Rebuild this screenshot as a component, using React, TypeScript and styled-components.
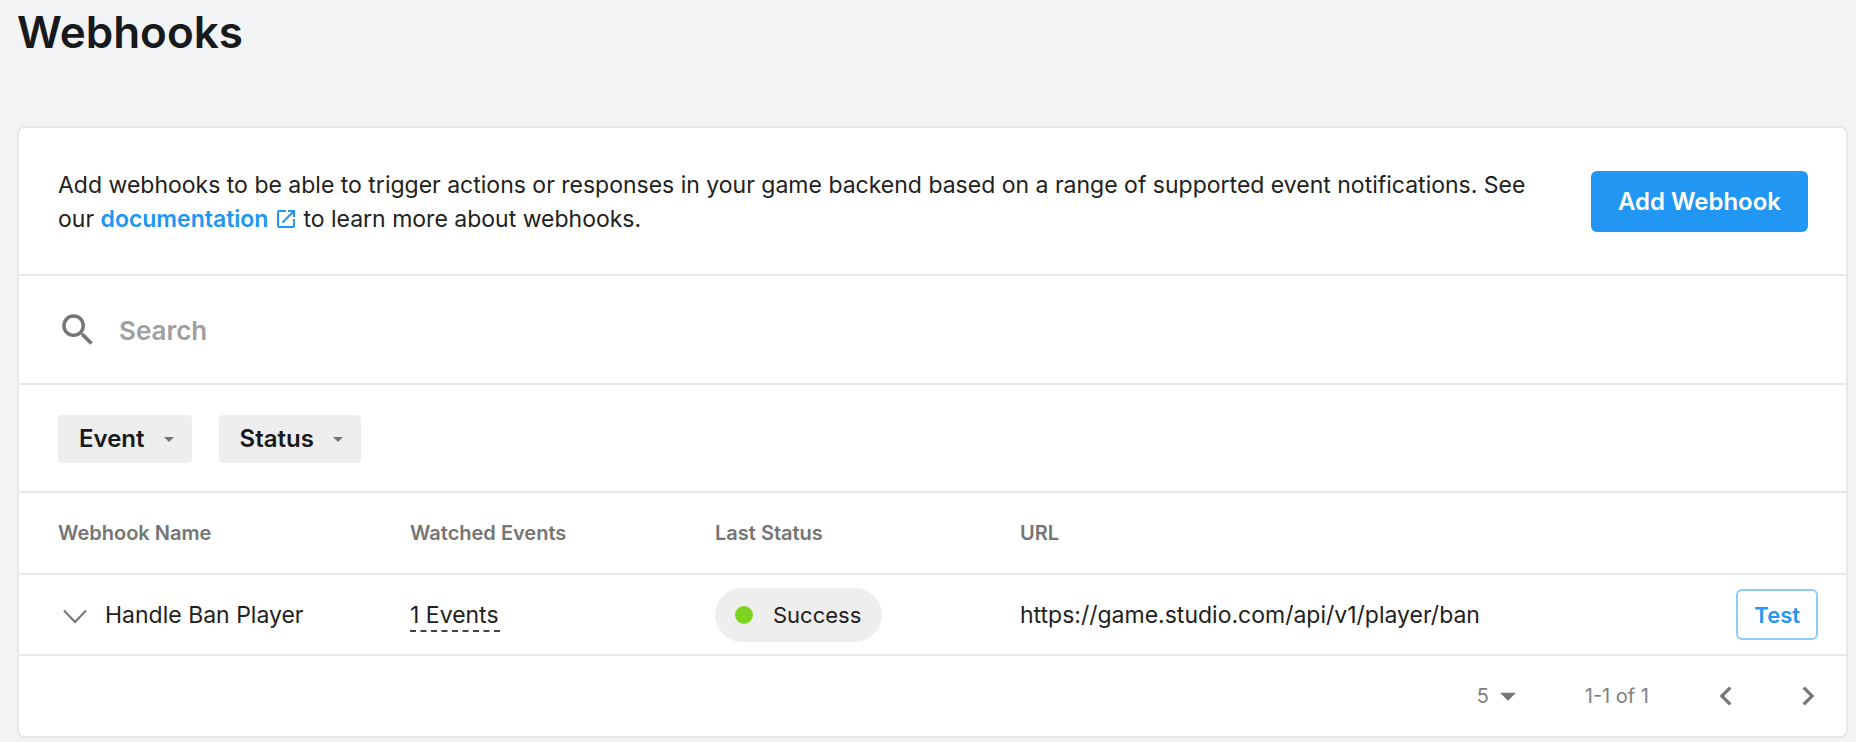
import React from "react";
import styled, { createGlobalStyle } from "styled-components";
import { MdSearch, MdOpenInNew, MdArrowDropDown, MdChevronLeft, MdChevronRight } from "react-icons/md";

const line = "2px solid #e8e8e8";

const GlobalStyle = createGlobalStyle`
  * { box-sizing: border-box; }
  body {
    margin: 0;
    background: #f1f3f5;
    color: #212121;
    font-family: Inter, "Liberation Sans", sans-serif;
    font-size: 23px;
    line-height: 34px;
  }
  button, input, select { font: inherit; color: inherit; }
  button { cursor: pointer; }
`;

const Page = styled.main`
  padding: 4px 8px 5px 17px;
`;

const Title = styled.h1`
  margin: 0 0 66px;
  font-size: 44px;
  line-height: 56px;
  font-weight: 600;
  color: #18191a;
`;

const Card = styled.section`
  background: #fff;
  border: ${line};
  border-radius: 8px;
`;

const Intro = styled.div`
  display: flex;
  align-items: flex-start;
  justify-content: space-between;
  gap: 32px;
  padding: 40px 38px 38px 39px;
  border-bottom: ${line};

  p { margin: 0; flex: 1; }
`;

const DocLink = styled.a`
  display: inline-flex;
  align-items: center;
  gap: 6px;
  margin-right: 5px;
  color: #2196f3;
  font-weight: 600;
  text-decoration: none;
`;

const PrimaryButton = styled.button`
  margin-top: 3px;
  height: 61px;
  padding: 0 27px;
  border: 0;
  border-radius: 6px;
  background: #2196f3;
  color: #fff;
  font-size: 24px;
  font-weight: 600;
  white-space: nowrap;
`;

const SearchBar = styled.label`
  display: flex;
  align-items: center;
  gap: 20px;
  height: 109px;
  padding: 0 38px;
  border-bottom: ${line};
  color: #757575;
`;

const SearchInput = styled.input`
  flex: 1;
  padding: 2px 0 0;
  border: 0;
  outline: 0;
  font-size: 26px;
  font-weight: 600;

  &::placeholder { color: #a0a0a0; opacity: 1; }
`;

const Filters = styled.div`
  display: flex;
  align-items: center;
  gap: 27px;
  height: 108px;
  padding: 2px 39px 0;
  border-bottom: ${line};
`;

const FilterButton = styled.button`
  display: flex;
  align-items: center;
  gap: 12px;
  height: 48px;
  padding: 0 11px 0 21px;
  border: 0;
  border-radius: 4px;
  background: #eee;
  color: #18191a;
  font-size: 24px;
  font-weight: 600;

  svg { color: #757575; }
`;

const Table = styled.table`
  width: 100%;
  border-collapse: separate;
  border-spacing: 0;
  table-layout: fixed;

  tr { height: 81px; }
  thead tr { height: 82px; }
  th, td { padding: 0; border-bottom: ${line}; text-align: left; white-space: nowrap; }
  th { color: #757575; font-size: 20px; font-weight: 600; }
  th:first-child, td:first-child { padding-left: 39px; }
  td:last-child { padding-right: 28px; text-align: right; }
`;

const Col = styled.col<{ $width?: number }>`
  width: ${(p) => (p.$width ? `${p.$width}px` : "auto")};
`;

const NameCell = styled.div`
  display: flex;
  align-items: center;
  gap: 13px;
`;

const IconButton = styled.button`
  display: flex;
  padding: 0;
  border: 0;
  background: none;
  color: #757575;
`;

const EventCount = styled.span`
  padding: 0 1px 1px 0;
  border-bottom: 2px dashed #424242;
`;

const StatusPill = styled.span`
  display: inline-flex;
  align-items: center;
  gap: 20px;
  height: 54px;
  padding: 0 21px 0 20px;
  border-radius: 27px;
  background: #eee;
  font-size: 22px;
  vertical-align: middle;

  &::before {
    content: "";
    width: 18px;
    height: 18px;
    border-radius: 50%;
    background: #7ed321;
  }
`;

const OutlineButton = styled.button`
  height: 51px;
  padding: 0 16px;
  border: 2px solid #90cbf9;
  border-radius: 6px;
  background: #fff;
  color: #2196f3;
  font-size: 22px;
  font-weight: 600;
  vertical-align: middle;
`;

const Footer = styled.footer`
  display: flex;
  align-items: center;
  justify-content: flex-end;
  height: 80px;
  padding-right: 19px;
  color: #808080;
  font-size: 20px;
`;

const PageSize = styled.label`
  display: grid;
  align-items: center;
  margin-right: 58px;

  select, svg { grid-area: 1 / 1; }
  select {
    width: 50px;
    padding: 0;
    border: 0;
    outline: 0;
    background: none;
    appearance: none;
  }
  svg { justify-self: end; pointer-events: none; color: #757575; }
`;

const Pager = styled.nav`
  display: flex;
  gap: 44px;
  margin-left: 58px;
`;

const Chevron = () => (
  <svg width="34" height="34" viewBox="0 0 34 34" fill="none" stroke="currentColor" strokeWidth="2">
    <path d="M6 12.5 17 24 28 12.5" />
  </svg>
);

const filters = ["Event", "Status"];

export default function App() {
  return (
    <Page>
      <GlobalStyle />
      <Title>Webhooks</Title>
      <Card>
        <Intro>
          <p>
            Add webhooks to be able to trigger actions or responses in your game backend based on a range of
            supported event notifications. See our{" "}
            <DocLink href="#documentation">
              documentation
              <MdOpenInNew size={24} />
            </DocLink>
            to learn more about webhooks.
          </p>
          <PrimaryButton type="button">Add Webhook</PrimaryButton>
        </Intro>
        <SearchBar>
          <MdSearch size={42} />
          <SearchInput type="text" placeholder="Search" aria-label="Search" />
        </SearchBar>
        <Filters>
          {filters.map((name) => (
            <FilterButton type="button" key={name}>
              {name}
              <MdArrowDropDown size={24} />
            </FilterButton>
          ))}
        </Filters>
        <Table>
          <colgroup>
            <Col $width={391} />
            <Col $width={305} />
            <Col $width={305} />
            <Col />
            <Col $width={160} />
          </colgroup>
          <thead>
            <tr>
              <th scope="col">Webhook Name</th>
              <th scope="col">Watched Events</th>
              <th scope="col">Last Status</th>
              <th scope="col">URL</th>
              <th scope="col" aria-label="Actions" />
            </tr>
          </thead>
          <tbody>
            <tr>
              <td>
                <NameCell>
                  <IconButton type="button" aria-label="Expand"><Chevron /></IconButton>
                  Handle Ban Player
                </NameCell>
              </td>
              <td><EventCount>1 Events</EventCount></td>
              <td><StatusPill>Success</StatusPill></td>
              <td>https://game.studio.com/api/v1/player/ban</td>
              <td><OutlineButton type="button">Test</OutlineButton></td>
            </tr>
          </tbody>
        </Table>
        <Footer>
          <PageSize>
            <select aria-label="Rows per page" defaultValue="5">
              <option>5</option>
              <option>10</option>
            </select>
            <MdArrowDropDown size={38} />
          </PageSize>
          <span>1-1 of 1</span>
          <Pager aria-label="Pagination">
            <IconButton type="button" aria-label="Previous page"><MdChevronLeft size={38} /></IconButton>
            <IconButton type="button" aria-label="Next page"><MdChevronRight size={38} /></IconButton>
          </Pager>
        </Footer>
      </Card>
    </Page>
  );
}
